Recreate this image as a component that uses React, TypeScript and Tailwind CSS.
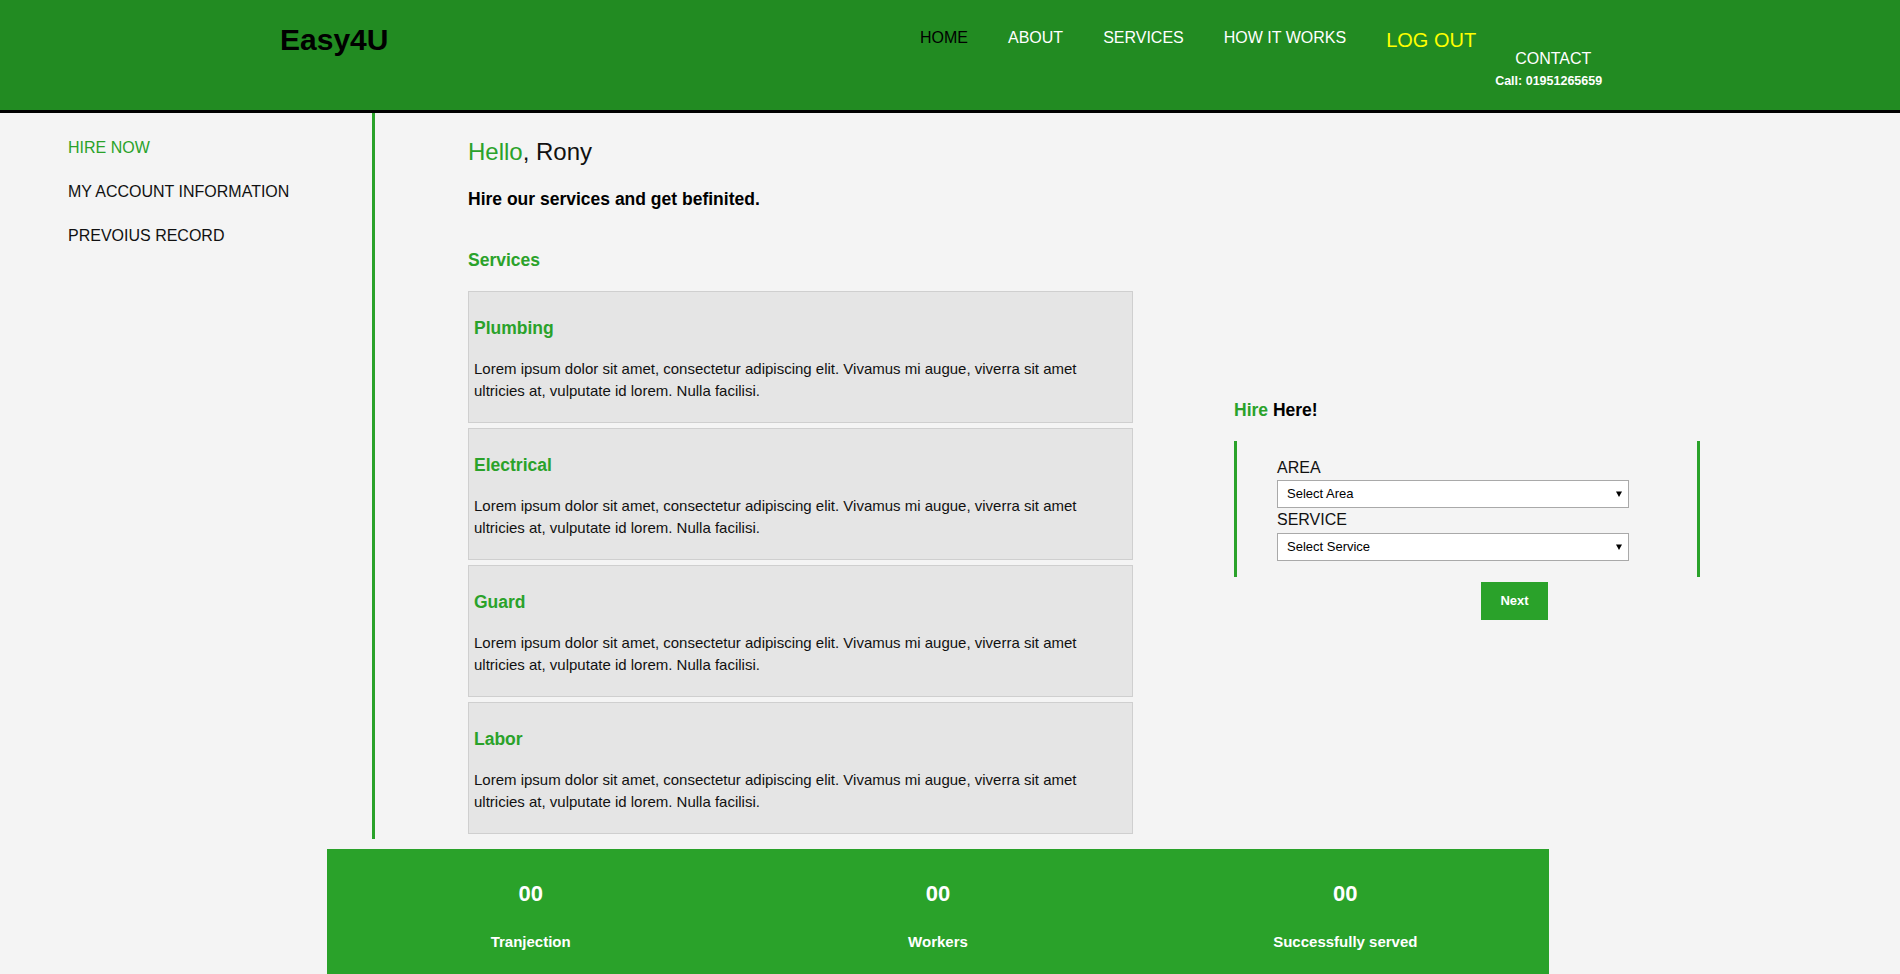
import React from "react";

const services = ["Plumbing", "Electrical", "Guard", "Labor"];

const lorem =
  "Lorem ipsum dolor sit amet, consectetur adipiscing elit. Vivamus mi augue, viverra sit amet ultricies at, vulputate id lorem. Nulla facilisi.";

const stats = [
  { value: "00", label: "Tranjection" },
  { value: "00", label: "Workers" },
  { value: "00", label: "Successfully served" },
];

const SelectBox: React.FC<{ placeholder: string }> = ({ placeholder }) => {
  return (
    <div className="relative w-[352px] h-[28px]">
      <select
        className="appearance-none w-full h-full bg-white border border-[#a9a9a9] pl-[9px] text-[13px] text-black outline-none"
        defaultValue=""
      >
        <option value="">{placeholder}</option>
      </select>
      {/* dropdown arrow */}
      <svg
        className="pointer-events-none absolute right-[7px] top-[11px]"
        width="6"
        height="6"
        viewBox="0 0 6 6"
      >
        <polygon points="0,0.5 6,0.5 3,6" fill="#000" />
      </svg>
    </div>
  );
};

const App: React.FC = () => {
  return (
    <div className="h-screen overflow-hidden bg-[#f4f4f4] font-['Liberation_Sans',Arial,sans-serif] text-[#111]">
      {/* header */}
      <header className="h-[113px] bg-[#228b22] border-b-[3px] border-black flex items-start">
        <div className="ml-[280px] mt-[23px] w-[640px] text-[30px] leading-[34px] font-bold text-black">
          Easy4U
        </div>
        <nav className="flex items-start gap-[40px] text-[16px] leading-[18px] text-white">
          <a className="mt-[29px] text-black">HOME</a>
          <a className="mt-[29px]">ABOUT</a>
          <a className="mt-[29px]">SERVICES</a>
          <a className="mt-[29px]">HOW IT WORKS</a>
          <a className="mt-[29px] text-[20px] leading-[23px] text-[#ffff00]">
            LOG OUT
          </a>
        </nav>
        <div className="ml-[19px] mt-[50px] flex flex-col items-start text-white">
          <span className="ml-[20px] text-[16px] leading-[18px]">CONTACT</span>
          <span className="mt-[6px] text-[12.5px] leading-[14px] font-bold">
            Call: 01951265659
          </span>
        </div>
      </header>

      <div className="flex">
        {/* sidebar */}
        <aside className="w-[375px] shrink-0 border-r-[3px] border-[#2aa22a] pl-[68px] pt-[26px]">
          <ul className="flex flex-col gap-[26px] text-[16px] leading-[18px]">
            <li className="text-[#2aa22a]">HIRE NOW</li>
            <li>MY ACCOUNT INFORMATION</li>
            <li>PREVOIUS RECORD</li>
          </ul>
        </aside>

        {/* main */}
        <main className="flex pl-[93px] pt-[25px]">
          <div className="w-[665px]">
            <h2 className="text-[24px] leading-[28px]">
              <span className="text-[#2aa22a]">Hello</span>, Rony
            </h2>
            <p className="mt-[23px] text-[17.5px] leading-[20px] font-bold text-black">
              Hire our services and get befinited.
            </p>
            <h3 className="mt-[41px] text-[17.5px] leading-[20px] font-bold text-[#2aa22a]">
              Services
            </h3>
            <div className="mt-[21px] flex flex-col">
              {services.map((s) => (
                <div
                  key={s}
                  className="mb-[5px] border border-[#cfcfcf] bg-[#e5e5e5] pl-[5px] pr-[20px] pt-[26px] pb-[20px]"
                >
                  <h4 className="text-[17.5px] leading-[20px] font-bold text-[#2aa22a]">
                    {s}
                  </h4>
                  <p className="mt-[20px] text-[15px] leading-[22px] text-[#111]">
                    {lorem}
                  </p>
                </div>
              ))}
            </div>
          </div>

          {/* hire form */}
          <div className="ml-[101px] w-[466px] pt-[262px]">
            <h3 className="text-[17.5px] leading-[20px] font-bold text-black">
              <span className="text-[#2aa22a]">Hire</span> Here!
            </h3>
            <div className="mt-[21px] border-x-[3px] border-[#2aa22a] pl-[40px] pt-[18px] pb-[16px]">
              <label className="block text-[16px] leading-[18px] text-[#111]">
                AREA
              </label>
              <div className="mt-[3px]">
                <SelectBox placeholder="Select Area" />
              </div>
              <label className="mt-[3px] block text-[16px] leading-[18px] text-[#111]">
                SERVICE
              </label>
              <div className="mt-[4px]">
                <SelectBox placeholder="Select Service" />
              </div>
            </div>
            <button className="mt-[5px] ml-[247px] w-[67px] h-[38px] bg-[#2aa22a] text-white text-[13px] font-bold">
              Next
            </button>
          </div>
        </main>
      </div>

      {/* stats */}
      <section className="ml-[327px] mt-[10px] w-[1222px] bg-[#2aa22a] grid grid-cols-3 pt-[32px] pb-[40px] text-center text-white font-bold">
        {stats.map((st) => (
          <div key={st.label} className="flex flex-col items-center">
            <span className="text-[22px] leading-[26px]">{st.value}</span>
            <span className="mt-[26px] text-[15px] leading-[18px]">
              {st.label}
            </span>
          </div>
        ))}
      </section>
    </div>
  );
};

export default App;
